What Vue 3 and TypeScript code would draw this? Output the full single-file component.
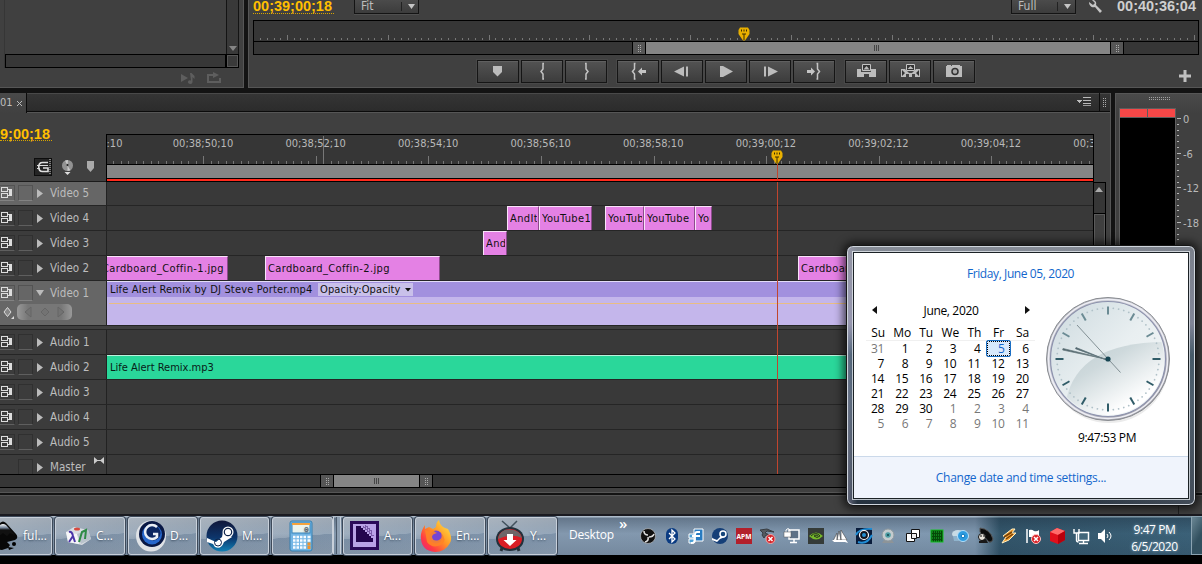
<script setup lang="ts">
interface Clip { x: number; w: number; label: string }
interface Track { name: string; clips: Clip[]; lit?: boolean; tall?: boolean; audio?: boolean; master?: boolean }

const tracks: Track[] = [
  { name: 'Video 5', clips: [], lit: true },
  {
    name: 'Video 4',
    clips: [
      { x: 400, w: 32, label: 'AndIt' },
      { x: 432, w: 53, label: 'YouTube1' },
      { x: 498, w: 39, label: 'YouTube' },
      { x: 537, w: 51, label: 'YouTube' },
      { x: 588, w: 17, label: 'YouTube' },
    ],
  },
  { name: 'Video 3', clips: [{ x: 376, w: 24, label: 'AndIt' }] },
  {
    name: 'Video 2',
    clips: [
      { x: -8, w: 129, label: 'Cardboard_Coffin-1.jpg' },
      { x: 158, w: 175, label: 'Cardboard_Coffin-2.jpg' },
      { x: 691, w: 120, label: 'Cardboard_Coffin-3.jpg' },
    ],
  },
  { name: 'Video 1', clips: [], lit: true, tall: true },
  { name: 'Audio 1', clips: [], audio: true },
  { name: 'Audio 2', clips: [], audio: true },
  { name: 'Audio 3', clips: [], audio: true },
  { name: 'Audio 4', clips: [], audio: true },
  { name: 'Audio 5', clips: [], audio: true },
  { name: 'Master', clips: [], audio: true, master: true },
]

const monitorTicks = Array.from({ length: 146 }, (_, i) => ({ x: Math.round(33 + (i - 5) * 6.717), major: (i - 5) % 15 === 0 })).filter(t => t.x >= 0 && t.x < 943)
const rulerTicks = Array.from({ length: 134 }, (_, i) => ({ x: Math.round(96.3 + (i - 13) * 7.505), major: (i - 13) % 15 === 0 })).filter(t => t.x > 0 && t.x < 986)
const rulerLabels = [':10', '00;38;50;10', '00;38;52;10', '00;38;54;10', '00;38;56;10', '00;38;58;10', '00;39;00;12', '00;39;02;12', '00;39;04;12', '00;39;06;12']
  .map((text, i) => ({ text, x: i === 0 ? 7.5 : 96 + (i - 1) * 112.57 }))

const meterTicks = Array.from({ length: 30 }, (_, i) => ({ y: Math.round(10 + i * 5.78), major: i % 6 === 0 }))
const meterLabels = ['0', '-6', '-12', '-18']

const weekdays = ['Su', 'Mo', 'Tu', 'We', 'Th', 'Fr', 'Sa']
const days = [31, ...Array.from({ length: 30 }, (_, i) => i + 1), ...Array.from({ length: 11 }, (_, i) => i + 1)]
const isOther = (i: number) => i === 0 || i > 30

const hourMarks = Array.from({ length: 12 }, (_, i) => i * 30)
const minuteMarks = Array.from({ length: 60 }, (_, i) => i).filter(i => i % 5).map(i => i * 6)
</script>

<template>
  <div class="screen">
    <div class="top">
      <section class="source">
        <div class="src-view">
          <div class="src-main"></div>
          <div class="src-vscroll">
            <svg width="8" height="6"><path d="M0 1h8L4 6z" fill="#858585" /></svg>
          </div>
          <div class="src-hscroll"></div>
          <div class="src-corner"></div>
        </div>
        <div class="src-tools">
          <svg width="16" height="12" fill="#5e5e5e"><path d="M1 2l7 4-7 4zM10 1h1.500l3 3v3l-2-2v5a2.300 1.800 0 1 1-1.500-1.600z" /></svg>
          <svg width="15" height="12" fill="none" stroke="#5e5e5e" stroke-width="2"><path d="M6 3H1v7h12V6" /><path d="M6 0l6 3-6 3z" fill="#5e5e5e" stroke="none" /></svg>
        </div>
      </section>

      <section class="program">
        <div class="prog-info">
          <span class="tc tc-main">00;39;00;18</span>
          <div class="select fit"><span>Fit</span><i></i><svg width="8" height="6"><path d="M0 0h7L3.500 5z" fill="#c5c5c5" /></svg></div>
          <div class="grow"></div>
          <div class="select full"><span>Full</span><i></i><svg width="8" height="6"><path d="M0 0h7L3.500 5z" fill="#c5c5c5" /></svg></div>
          <svg class="wrench" width="15" height="14"><path d="M4 0l3 3-2 2-4-3c0 4 3 6 6 5l5 6 2-2-6-6c1-3-1-5-4-5z" fill="#c4c4c4" /></svg>
          <span class="duration">00;40;36;04</span>
        </div>
        <div class="mon-ruler">
          <svg width="943" height="20" shape-rendering="crispEdges">
            <rect v-for="t in monitorTicks" :key="t.x" :x="t.x" :y="t.major ? 14 : 17" width="1" :height="t.major ? 5 : 2" fill="#777" />
          </svg>
          <svg class="mon-head" width="12" height="14" viewBox="0 0 12 14"><path d="M2 .5h8L11.500 3v4L7 13.500H5L.5 7V3z" fill="#e9b000" /><path d="M3.500 2.500v2M6 2.500v2M8.500 2.500v2M4 7h4M6 7v6" stroke="#3a2c00" fill="none" /></svg>
          <div class="zoombar">
            <div class="zb-pre"></div>
            <div class="handle"><b class="dots"></b></div>
            <div class="thumb"><b class="lines"></b></div>
            <div class="handle"><b class="dots"></b></div>
          </div>
        </div>
        <div class="transport">
          <div class="btn"><svg width="42" height="23"><path d="M16 6h9v6l-4.500 4.500L16 12z" fill="#bcbcbc" /></svg></div>
          <div class="btn"><svg width="42" height="23"><path d="M23 3.500h-1V9l-2 2.500 2 2.500v5h1" fill="none" stroke="#c4c4c4" stroke-width="1.500" /></svg></div>
          <div class="btn gap"><svg width="42" height="23"><path d="M20 3.500h1V9l2 2.500-2 2.500v5h-1" fill="none" stroke="#c4c4c4" stroke-width="1.500" /></svg></div>
          <div class="btn"><svg width="42" height="23"><path d="M18.500 3.500h-1V9l-2 2.500 2 2.500v5h1" fill="none" stroke="#c4c4c4" stroke-width="1.500" /><path d="M21 11.500l4-4V10h4v3h-4v2.500z" fill="#c4c4c4" /></svg></div>
          <div class="btn"><svg width="42" height="23" fill="#bcbcbc"><path d="M13 11.500l10-5v10zM25 6.500h2v10h-2z" /></svg></div>
          <div class="btn"><svg width="42" height="23" fill="#bcbcbc"><path d="M15 6h3l10 5.500L18 17h-3z" /></svg></div>
          <div class="btn"><svg width="42" height="23" fill="#bcbcbc"><path d="M15 6.500h2v10h-2zM19 6.500l10 5-10 5z" /></svg></div>
          <div class="btn gap"><svg width="42" height="23"><path d="M23.500 3.500h1V9l2 2.500-2 2.500v5h-1" fill="none" stroke="#c4c4c4" stroke-width="1.500" /><path d="M22 11.500l-4-4V10h-4v3h4v2.500z" fill="#c4c4c4" /></svg></div>
          <div class="btn"><svg width="42" height="23" fill="#bcbcbc"><path d="M12 9h4v3h10V9h5v8h-7v-3h-5v3h-7z" /><path d="M17.500 4.500h8v6h-8z" fill="#333" stroke="#c4c4c4" /><path d="M18.500 9.500l3-3.500 3 3.500z" /></svg></div>
          <div class="btn"><svg width="42" height="23" fill="#bcbcbc"><path d="M12 9h4l4 4h3l4-4h4v8h-5v-3h-3v3h-3v-3h-3v3h-5z" /><path d="M13 10l3 3-3 3zM30 10l-3 3 3 3z" fill="#333" /><path d="M17.500 4.500h8v6h-8z" fill="#333" stroke="#c4c4c4" /><path d="M18.500 9l3-3 3 3z" /></svg></div>
          <div class="btn"><svg width="42" height="23"><path d="M13 6h1V5h4v1h1V5h8v1h2v11H13z" fill="#bcbcbc" /><circle cx="22" cy="11.500" r="3" fill="#aaa" stroke="#333" stroke-width="1.500" /></svg></div>
          <svg class="plus" width="12" height="12"><path d="M4.500 0h3v4.500H12v3H7.500V12h-3V7.500H0v-3h4.500z" fill="#c0c0c0" /></svg>
        </div>
      </section>
    </div>

    <div class="middle">
      <section class="timeline">
        <div class="tabs">
          <div class="tab">01 <svg width="7" height="7"><path d="M1 1l5 5M6 1L1 6" stroke="#bbb" /></svg></div>
          <div class="tabfill"></div>
          <svg class="menu" width="15" height="10" shape-rendering="crispEdges"><path d="M0 3h5L2.500 6z" fill="#bbb" /><path d="M6 .5h8M6 3.500h8M6 6.500h8" stroke="#bbb" /><path d="M6 9h8v-1H6z" fill="#999" /></svg>
          <div class="grip"><b class="dots"></b></div>
        </div>

        <div class="tl-body">
          <div class="tl-left">
            <span class="tc">9;00;18</span>
            <div class="tl-tools">
              <svg width="19" height="18"><rect x=".5" y=".5" width="17" height="17" fill="#252525" stroke="#0d0d0d" /><path d="M14 4.500H8.500C3.500 4.500 3.500 13.500 8.500 13.500H14V10H9" fill="none" stroke="#e0e0e0" stroke-width="1.600" /><path d="M3 7.500h7M3 10.500h3M10 7.500h4" fill="none" stroke="#ddd" /><path d="M16 1v16" stroke="#ddd" stroke-dasharray="1 1" /></svg>
              <svg width="13" height="17"><circle cx="6.500" cy="6.500" r="5.500" fill="#929292" /><path d="M6.500 6.500L4 1.500l3-.5zM6.500 6.500l3 5-3 .5z" fill="#cacaca" /><circle cx="6.500" cy="6" r="1" fill="#222" /><path d="M3.500 13h6L6.500 16z" fill="#ddd" /></svg>
              <svg width="9" height="12"><path d="M1 0h7v7l-3.500 4L1 7z" fill="#aaa" /></svg>
            </div>
          </div>
          <div class="tl-ruler">
            <svg width="986" height="28" shape-rendering="crispEdges">
              <rect v-for="t in rulerTicks" :key="t.x" :x="t.x" :y="t.major ? 20 : 25" width="1" :height="t.major ? 8 : 3" fill="#777" />
              <rect x="216" y="0" width="1" height="28" fill="#777" />
              <text v-for="l in rulerLabels" :key="l.text" :x="l.x" y="11" text-anchor="middle" class="rl">{{ l.text }}</text>
            </svg>
            <div class="work"></div>
            <div class="render"></div>
            <div class="headline"></div>
            <svg class="head" width="12" height="14" viewBox="0 0 12 14"><path d="M2 .5h8L11.500 3v4L7 13.500H5L.5 7V3z" fill="#e9b000" /><path d="M3.500 2.500v2M6 2.500v2M8.500 2.500v2M4 7h4M6 7v6" stroke="#3a2c00" fill="none" /></svg>
          </div>
        </div>

        <div class="tracks-wrap">
          <div class="tracks">
            <div v-for="t in tracks" :key="t.name" class="track" :class="{ tall: t.tall, master: t.master }">
              <div class="thead" :class="{ lit: t.lit }">
                <div class="cell first" :class="{ none: t.master }">
                  <svg v-if="!t.master" width="12" height="11" shape-rendering="crispEdges"><path d="M0 0h7v5H0zM1 1v3h5V1zM0 6h7v5H0zM1 7v3h5V7z" fill="#ddd" fill-rule="evenodd" /><path d="M7 2h4v7H7V8h1V3H7z" fill="#ddd" /></svg>
                </div>
                <div class="cell"></div>
                <svg class="tri" width="8" height="9"><path :d="t.tall ? 'M0 1h8L4 7z' : 'M1 0l6 4.5L1 9z'" fill="#bbb" /></svg>
                <span class="tname">{{ t.name }}</span>
                <svg v-if="t.master" class="bow" width="10" height="7"><path d="M0 0l4 3.500L0 7zM10 0L6 3.500 10 7z" fill="#ccc" /><path d="M3 3.500h4" stroke="#ccc" /></svg>
                <div v-if="t.tall" class="keyrow">
                  <svg width="16" height="15"><path d="M7.500 2.500L11 7l-3.500 4.500L4 7z" fill="#888" stroke="#ddd" /><path d="M14 11v3h-3z" fill="#ddd" /></svg>
                  <div class="keypill"><svg width="55" height="16" fill="#737373" stroke="#666"><path d="M14 3v10L8 8zM41 3v10l6-5zM28 4l4 4-4 4-4-4z" /></svg></div>
                </div>
              </div>
              <div class="lane">
                <div v-for="c in t.clips" :key="c.x" class="clip" :style="{ left: c.x + 'px', width: c.w + 'px' }"><span>{{ c.label }}</span></div>
                <div v-if="t.tall" class="vclip">
                  <div class="vtitle"><span class="vname">Life Alert Remix by DJ Steve Porter.mp4</span><span class="fx">Opacity:Opacity<svg width="6" height="4"><path d="M0 0h6L3 3.500z" fill="#111" /></svg></span></div>
                  <div class="opline"></div>
                </div>
                <div v-if="t.name === 'Audio 2'" class="aclip">Life Alert Remix.mp3</div>
              </div>
            </div>
            <div class="playline"></div>
          </div>
          <div class="vscroll">
            <div class="vup"><svg width="8" height="5"><path d="M0 5h8L4 0z" fill="#aaa" /></svg></div>
            <div class="vthumb"></div>
          </div>
        </div>
        <div class="hbar">
          <div class="hb-pre"></div>
          <div class="handle"><b class="dots"></b></div>
          <div class="thumb"><b class="lines"></b></div>
          <div class="handle"><b class="dots"></b></div>
        </div>
      </section>

      <section class="meters">
        <b class="mgrip"></b>
        <div class="mrow">
          <div class="mbox"><div class="peaks"><i></i><i></i></div><div class="mblack"></div></div>
          <svg width="26" height="180" shape-rendering="crispEdges">
            <rect v-for="t in meterTicks" :key="t.y" x="1" :y="t.y" :width="t.major ? 4 : 2" height="1" fill="#b5b5b5" />
            <text v-for="(m, i) in meterLabels" :key="m" x="7" :y="15 + i * 34.7" class="ml">{{ m }}</text>
          </svg>
        </div>
      </section>
    </div>

    <div class="status"><div></div></div>

    <footer class="taskbar">
      <div class="task t0">
        <svg width="21" height="34" viewBox="0 0 21 34"><defs><linearGradient id="ink" x1="0" y1="0" x2="0" y2="1"><stop offset="0" stop-color="#fff" /><stop offset=".3" stop-color="#7b8ba0" /><stop offset=".5" stop-color="#111" /></linearGradient></defs><path d="M-12 19L0 4q3-3 6 0l10 11q3 4-1 6l-8 2 3 3-2 3-6 2-6-1z" fill="#080808" /><path d="M-8 17L0 6q3-2 6 0l9 10-5-2-3 3-4-3-4 3z" fill="url(#ink)" /><circle cx="14" cy="25" r="2" /><path d="M8 28l6 1-5 2z" /></svg>
        <span>ful...</span>
      </div>
      <div class="task t1">
        <svg width="32" height="32" viewBox="0 0 32 32"><path d="M4 12l8-5 14 3 3 9-9 6-14-3z" fill="#d9dde2" /><path d="M4 12l11 2 2 10-11-2z" fill="#f6f6f8" /><path d="M15 14l11-4 3 9-10 5z" fill="#b9c3cc" /><path d="M7 12q3-1 4 4l2 6M11 16l-4 6" fill="none" stroke="#4b35a8" stroke-width="2" /><path d="M17 22l3-10 4-2-1 9" fill="none" stroke="#2e8b46" stroke-width="2" /><ellipse cx="15" cy="9" rx="3" ry="1.500" fill="#d7493f" /></svg>
        <span>C...</span>
      </div>
      <div class="task t2">
        <svg width="32" height="34" viewBox="0 0 32 34"><ellipse cx="16" cy="17" rx="15" ry="15.500" fill="#dfe2e6" /><circle cx="17" cy="15" r="13" fill="#091845" /><circle cx="17" cy="15.500" r="10" fill="#2767cc" /><circle cx="18" cy="14" r="7.500" fill="#0b2560" /><path d="M22 8a7 7 0 1 0 0 10v-3h-4" fill="none" stroke="#e9eef5" stroke-width="2.500" /></svg>
        <span>D...</span>
      </div>
      <div class="task t3">
        <svg width="32" height="32" viewBox="0 0 32 32"><defs><linearGradient id="st" x1="0" y1="0" x2="0" y2="1"><stop offset="0" stop-color="#10173a" /><stop offset=".55" stop-color="#0d356b" /><stop offset="1" stop-color="#1080b5" /></linearGradient></defs><circle cx="16" cy="16" r="15.500" fill="url(#st)" /><path d="M1 18l9 4 6-5 1-5 9 5-8 5q-3 8-9 5l-2-3-6-2z" fill="#fff" /><circle cx="22" cy="12" r="5.500" fill="#fff" /><circle cx="22" cy="12" r="3.700" fill="#fff" stroke="#10254c" stroke-width="1.200" /><circle cx="12" cy="22.500" r="3.500" fill="none" stroke="#10254c" /></svg>
        <span>M...</span>
      </div>
      <div class="task t4">
        <svg width="24" height="32" viewBox="0 0 24 32"><rect x="1" y="1" width="22" height="30" rx="2" fill="#73b6e5" stroke="#377fae" /><rect x="3" y="3" width="18" height="10" fill="#eaf3ec" stroke="#3983b9" /><path d="M3 3h18v2H3z" fill="#f3a23c" /><text x="15" y="12" font-family="Liberation Mono" font-size="8" fill="#345">0</text><path d="M4 17h13M4 20.500h13M4 24h13M4 27.500h13" stroke="#f6fbff" stroke-width="2.500" stroke-dasharray="2.500 1" /><path d="M18.500 17h3M18.500 20.500h3" stroke="#f6fbff" stroke-width="2.500" /><path d="M18.500 24h3M18.500 27.500h3" stroke="#f2932b" stroke-width="3" /></svg>
      </div>
      <div class="stack"></div>
      <div class="task t5">
        <svg width="30" height="30" viewBox="0 0 30 30"><rect x="1.500" y="1.500" width="26" height="26" fill="#b9a2e6" stroke="#2b0a58" stroke-width="3" /><path d="M6 5v16h17v-4h-2v-2h-2v-2h-2v-2h-2V9h-2V7h-2V5z" fill="#24064e" /><path d="M13 6h2v2h2v2h2v2h2v2h2v2M15 5h2v2h2v2h2v2h2" fill="none" stroke="#3a176c" stroke-dasharray="1 1" /></svg>
        <span>A...</span>
      </div>
      <div class="task t6">
        <svg width="32" height="32" viewBox="0 0 32 32"><defs><linearGradient id="ff" x1="1" y1="0" x2="0" y2="1"><stop offset="0" stop-color="#fff04a" /><stop offset=".45" stop-color="#ff9526" /><stop offset=".75" stop-color="#ff3b43" /><stop offset="1" stop-color="#e1208a" /></linearGradient></defs><path d="M19 0q1 6 6 8l3 1q5 9 2 14-5 9-15 9Q2 31 1 19q-1-7 4-14v4l4-2 4 2 3-2Q16 2 19 0z" fill="url(#ff)" /><circle cx="16" cy="17" r="6.500" fill="#7545d2" /><path d="M5 10q5 1 8 0l2 2 2 1q-5 1-5 4 1 5 7 3 4-2 2-7 7 7 0 12-9 4-14-3z" fill="#ff8426" opacity=".9" /></svg>
        <span>En...</span>
      </div>
      <div class="task t7">
        <svg width="32" height="34" viewBox="0 0 32 34"><path d="M8 2l8 7 7-7" fill="none" stroke="#43525e" stroke-width="1.500" /><path d="M8 29l-1 3M24 29l1 3" stroke="#28323a" stroke-width="3" /><ellipse cx="16" cy="20" rx="14" ry="12" fill="#22303b" /><ellipse cx="16" cy="20" rx="12" ry="10" fill="#d91d25" /><path d="M4 20Q6 10 16 10.500t12 8.500q-10-5-24 1z" fill="#6d6668" /><path d="M13 15h6v6h3.500L16 27l-6.500-6H13z" fill="#fff" /></svg>
        <span>Y...</span>
      </div>
      <div class="deskbar"><span>Desktop</span><b>»</b></div>
      <div class="tray">
        <svg viewBox="0 0 20 20"><circle cx="10" cy="10" r="7.500" fill="#111" stroke="#c7c7c7" stroke-width=".6" /><path d="M10 9q-4 0-4-4M10 11q1 4-3 5M11 11q4 0 5-3" fill="none" stroke="#ddd" stroke-width="1.600" /></svg>
        <svg viewBox="0 0 20 20"><rect x="4" y="2" width="12" height="16" rx="6" fill="#0a3b82" /><path d="M7 7l6 6-3 3V4l3 3-6 6" fill="none" stroke="#fff" stroke-width="1.300" /></svg>
        <svg viewBox="0 0 20 20"><path d="M8 3h9v12H8z" fill="#287bc0" stroke="#fff" /><path d="M3 8h5v4H3zM3 13h5v4H3z" fill="#4ba0d7" stroke="#fff" /><path d="M14 6h-3q-2 0-2 3v5q0 3-4 3M6 10h8" fill="none" stroke="#fff" stroke-width="1.800" /></svg>
        <svg viewBox="0 0 20 20"><circle cx="10" cy="10" r="8" fill="#153f78" /><path d="M2 12l5 2 4-4V7l4 4-5 2-3 3-5-2z" fill="#fff" /><circle cx="13" cy="8" r="3" fill="#17477b" stroke="#fff" stroke-width="1.500" /></svg>
        <svg viewBox="0 0 20 20"><path d="M2 2h16v16H2z" fill="#b3202b" /><text x="2.500" y="13" textLength="15" lengthAdjust="spacingAndGlyphs" class="apm">APM</text></svg>
        <svg viewBox="0 0 20 20"><path d="M2 4l7-1 7 3-7-1-2 2 7 3-6-1-2 3-2-3 1-2z" fill="#555a60" stroke="#383d42" /><circle cx="12.500" cy="13" r="4.500" fill="#d42025" stroke="#f2a8a8" /><path d="M10.500 11l4 4m0-4l-4 4" stroke="#fff" stroke-width="1.500" /></svg>
        <svg viewBox="0 0 20 20"><rect x="7" y="4" width="10" height="9" fill="#5d7186" stroke="#fff" stroke-width="1.500" /><path d="M12 13v3M8 16.500h7" stroke="#fff" stroke-width="1.500" /><path d="M4 6V4q2-3 4 0v2" fill="none" stroke="#fff" /><rect x="2" y="6" width="7" height="5" fill="#fff" stroke="#555" stroke-width=".5" /></svg>
        <svg viewBox="0 0 20 20"><rect x="2" y="2" width="16" height="16" fill="#353b38" /><path d="M3 10q7-7 14 0-7 7-14 0z" fill="#75b82b" /><path d="M5 10q5-5 9 0-3 3-6 0 2-2 4 0" fill="none" stroke="#27371d" /></svg>
        <svg viewBox="0 0 20 20"><path d="M3 15L7 7v8zM7 14l2-9 2 9zM11 14V4l6 10z" fill="#fff" stroke="#444" stroke-width=".6" /><path d="M2 14h14l2 3-3-1H4z" fill="#fff" /></svg>
        <svg viewBox="0 0 20 20"><rect x="2" y="2" width="16" height="16" fill="#091c3b" /><path d="M2 9q3-7 16-6M4 16q9 3 14-7" stroke="#218ed6" fill="none" stroke-width="2" /><circle cx="10" cy="9" r="4.500" fill="#10151f" stroke="#fff" stroke-width="1.200" /><circle cx="10" cy="9" r="2" fill="#258fd1" /></svg>
        <svg viewBox="0 0 20 20"><path d="M6 14h8l2 3H4z" fill="#8d9498" /><circle cx="10" cy="9" r="6" fill="#c4cccf" stroke="#8f999e" /><circle cx="10" cy="9" r="2.800" fill="#4d9da3" /><circle cx="10" cy="9" r="1" fill="#124650" /></svg>
        <svg viewBox="0 0 20 20" fill="#fff" stroke="#111"><path d="M8.500 3.500h8v8h-8z" /><path d="M3.500 7.500h8v8h-8z" /><path d="M8.500 7.500h5v5h-5z" fill="#eee" /></svg>
        <svg viewBox="0 0 20 20"><rect x="4" y="4" width="12" height="12" fill="#054907" stroke="#12c321" /><path d="M5 6h10M5 9h10M5 12h10M5 15h10" stroke="#1bb830" stroke-dasharray="1 1" /></svg>
        <svg viewBox="0 0 20 20"><ellipse cx="7" cy="8" rx="6" ry="4" fill="#c8dbe5" /><path d="M2 10h6v5H3z" fill="#8fb3cc" /><circle cx="12" cy="10" r="5.500" fill="#2f9ce0" stroke="#b5e0fa" /><circle cx="12" cy="10" r="1.800" fill="#fff" stroke="#0674bb" /></svg>
        <svg viewBox="0 0 20 20"><path d="M5 2q10 1 13 11-1 4-4 3L5 6z" fill="#0b0b0b" stroke="#555" /><circle cx="7" cy="11" r="3.500" fill="#e8e3db" stroke="#111" /><path d="M4 15l7-2 2 4H4z" fill="#181818" /><path d="M5 10h2m1 0h2" stroke="#111" /></svg>
        <svg viewBox="0 0 20 20"><path d="M13 3l-9 7 3 1-4 6 7-3 7-7h-4l3-4z" fill="#f2a034" stroke="#fff0c3" /><path d="M5 11l8-5M7 13l7-5" stroke="#784006" stroke-width="1.500" /></svg>
        <svg viewBox="0 0 20 20"><path d="M4 3v14" stroke="#fff" stroke-width="1.500" /><path d="M6 4q3-1 5 1 3 1 5-1v7H6z" fill="#fff" /><circle cx="13" cy="13" r="4.500" fill="#d92025" stroke="#ffc4c4" /><path d="M11 11l4 4m0-4l-4 4" stroke="#fff" stroke-width="1.500" /></svg>
        <svg viewBox="0 0 20 20"><path d="M10 2l8 3v9l-7 4-8-3V6z" fill="#e1101c" /><path d="M10 2l8 3-7 4-8-3z" fill="#ff6b6b" /><path d="M11 9l7-4v9l-7 4z" fill="#b8000c" /></svg>
        <svg viewBox="0 0 20 20"><rect x="7.500" y="6.500" width="10" height="8" fill="#43677b" stroke="#fff" stroke-width="1.500" /><path d="M12.500 15v2M8 17.500h9M3 3v4h5V3M5.500 7v7q0 2 2 2" fill="none" stroke="#fff" stroke-width="1.400" /></svg>
        <svg viewBox="0 0 20 20"><path d="M3 7h3l4-4v14l-4-4H3z" fill="#fff" /><path d="M12 8q2 2 0 4M14 6q4 4 0 8" fill="none" stroke="#fff" /></svg>
      </div>
      <div class="tclock"><span>9:47 PM</span><span>6/5/2020</span></div>
      <div class="showdesk"></div>
    </footer>

    <div class="flyout">
      <div class="fly-in">
        <div class="fly-date"><span>Friday, June 05, 2020</span></div>
        <div class="fly-mid">
          <div class="cal">
            <div class="cal-nav">
              <svg width="5" height="8"><path d="M5 0v8L0 4z" fill="#111" /></svg>
              <span>June, 2020</span>
              <svg width="5" height="8"><path d="M0 0v8l5-4z" fill="#111" /></svg>
            </div>
            <div class="cal-week"><span v-for="d in weekdays" :key="d">{{ d }}</span></div>
            <div class="cal-days"><span v-for="(d, i) in days" :key="i" :class="{ other: isOther(i), today: i === 5 }">{{ d }}</span></div>
          </div>
          <div class="clock">
            <svg width="130" height="130" viewBox="-65 -65 130 130">
              <defs>
                <linearGradient id="rim" x1="0" y1="0" x2="1" y2="1"><stop offset="0" stop-color="#a2a5aa" /><stop offset=".4" stop-color="#d5d6de" /><stop offset="1" stop-color="#8d8d95" /></linearGradient>
                <linearGradient id="face" x1="0" y1="0" x2="1" y2="1"><stop offset="0" stop-color="#ccd9de" /><stop offset=".5" stop-color="#e9eff1" /><stop offset="1" stop-color="#f4f7f8" /></linearGradient>
                <linearGradient id="gloss" x1="0" y1="0" x2=".8" y2="1"><stop offset="0" stop-color="#bdcbcf" /><stop offset=".35" stop-color="#ced9dc" /><stop offset=".8" stop-color="#fff" /></linearGradient>
                <clipPath id="dial"><circle r="56" /></clipPath>
              </defs>
              <ellipse cx="1" cy="4" rx="60" ry="60" fill="#ddd" opacity=".6" />
              <circle r="61.500" fill="url(#rim)" stroke="#898c91" />
              <circle r="59.500" fill="none" stroke="#eeeef5" stroke-width="1.500" />
              <circle r="57.500" fill="url(#face)" stroke="#8d92ae" stroke-width="1.200" />
              <path d="M-42 42Q-31-17 58-17V60H-42z" fill="url(#gloss)" clip-path="url(#dial)" />
              <circle v-for="a in minuteMarks" :key="a" cy="-51" r=".9" fill="#b0c1c8" :transform="`rotate(${a})`" />
              <rect v-for="a in hourMarks" :key="a" x="-1" y="-52.500" width="2" height="8" :fill="a > 80 && a < 290 ? '#305c68' : '#6b8b94'" :transform="`rotate(${a})`" />
              <path d="M0 1.500L-32-11.500l-.5 1.200z" fill="#455b63" stroke="#60747b" stroke-width=".8" />
              <path d="M2 1L-45-10.500l-.3 1.500z" fill="#455b63" stroke="#6b7c82" stroke-width=".8" />
              <path d="M-31-34L12.500 13.500" stroke="#5a6a70" stroke-width=".7" />
              <circle r="2.600" fill="#174653" />
            </svg>
            <span>9:47:53 PM</span>
          </div>
        </div>
        <div class="fly-foot"><span>Change date and time settings...</span></div>
      </div>
    </div>
  </div>
</template>

<style>
html, body { margin: 0; background: #000; overflow: hidden; }
</style>

<style scoped>
* { box-sizing: border-box; }
svg { display: block; flex: none; }
.screen { position: relative; width: 1202px; height: 564px; overflow: hidden; background: #131313; display: flex; flex-direction: column; font: 11px/14px "DejaVu Sans Condensed", "DejaVu Sans", sans-serif; font-stretch: condensed; color: #bdbdbd; white-space: nowrap; }
.top { display: flex; gap: 4px; height: 88px; flex: none; }
.source { width: 244px; background: #404040; border: solid #565656; border-width: 0 1px 1px 0; }
.src-view { display: grid; width: 234px; height: 68px; margin-left: 5px; grid-template: 54px 14px / 221px 13px; box-shadow: -1px 0 #363636; }
.src-vscroll { background: #393939; border: solid #141414; border-width: 0 1px; display: flex; align-items: flex-end; justify-content: center; padding-bottom: 3px; }
.src-hscroll { background: #373737; border: 1px solid #000; }
.src-corner { background: #3a3a3a; border: 1px solid #000; box-shadow: inset 0 0 0 1px #565656; }
.src-tools { display: flex; gap: 11px; margin: 4px 0 0 180px; }
.program { flex: 1; background: #404040; border: solid #565656; border-width: 0 0 1px 1px; padding-left: 4px; }
.prog-info { display: flex; height: 20px; align-items: flex-start; }
.grow { flex: 1; }
.tc { font: bold 14.500px/14px "Liberation Sans", Arial, sans-serif; color: #ffbf00; border-bottom: 1px dotted #d7a400; height: 14px; letter-spacing: 0; }
.tc-main { width: 81px; line-height: 13px; margin-right: 20px; }
.select { display: flex; align-items: flex-start; height: 14px; border: 1px solid #141414; border-top: 0; background: linear-gradient(#4b4b4b, #3c3c3c); box-shadow: 0 1px #4f4f4f; }
.select span { line-height: 13px; font-size: 12px; }
.select i { width: 1px; height: 9px; margin-top: 2px; background: #222; }
.select svg { margin: 4px 0 0 6px; flex: none; }
.fit { width: 65px; padding-left: 6px; }
.fit span { width: 40px; flex: none; }
.full { width: 65px; padding-left: 6px; }
.full span { width: 39px; flex: none; }
.wrench { margin-left: 12px; }
.duration { width: 79px; margin: 0 6px 0 14px; font: bold 14.500px/13px "Liberation Sans", Arial, sans-serif; color: #cfcfcf; }
.mon-ruler { position: relative; width: 946px; height: 35px; border: 1px solid #000; background: #363636; }
.mon-head { position: absolute; left: 484px; top: 6px; }
.zoombar { display: flex; height: 13px; border-top: 1px solid #000; }
.zb-pre { width: 378px; }
.handle { width: 14px; border: solid #000; border-width: 0 1px; background: #565656; display: flex; align-items: center; justify-content: center; }
.thumb { background: #858585; display: flex; align-items: center; justify-content: center; }
.zoombar .thumb { width: 464px; }
.dots { display: block; width: 3px; height: 7px; background: repeating-linear-gradient(#aaa 0 1px, transparent 1px 2px); -webkit-mask: repeating-linear-gradient(90deg, #000 0 1px, transparent 1px 2px); mask: repeating-linear-gradient(90deg, #000 0 1px, transparent 1px 2px); }
.lines { width: 5px; height: 6px; margin-right: 3px; background: repeating-linear-gradient(90deg, #444 0 1px, transparent 1px 2px); }
.hbar .lines { margin-right: 1px; }
.transport { display: flex; gap: 2px; padding: 5px 0 0 224px; }
.btn { width: 42px; height: 23px; background: linear-gradient(#535353, #3c3c3c); border: 1px solid #151515; box-shadow: inset 0 1px #606060, 0 0 0 1px #484848; }
.btn svg { margin: -1px; }
.btn.gap { margin-right: 8px; }
.plus { margin: 10px 0 0 202px; }
.middle { display: flex; gap: 4px; margin-top: 5px; height: 400px; flex: none; }
.timeline { width: 1111px; background: #404040; border: solid #565656; border-width: 0 1px 1px 0; display: flex; flex-direction: column; }
.tabs { display: flex; height: 20px; background: linear-gradient(#353535, #2b2b2b); border-bottom: 1px solid #565656; flex: none; box-shadow: inset 0 -1px #0b0b0b, inset 0 1px #494949; }
.tab { width: 27px; height: 20px; background: linear-gradient(#494949, #404040); border-right: 1px solid #0b0b0b; display: flex; align-items: center; gap: 3px; padding-right: 3px; }
.tabfill { flex: 1; }
.menu { margin: 4px 7px 0 0; }
.grip { width: 11px; border-left: 1px solid #0b0b0b; height: 18px; padding: 5px 0 0 3px; }
.grip .dots { height: 10px; }
.tl-body { display: flex; height: 69px; flex: none; }
.tl-left { width: 106px; padding-top: 14px; border-bottom: 1px solid #1b1b1b; }
.tl-left .tc { display: block; width: 52px; }
.tl-tools { display: flex; margin: 17px 0 0 34px; gap: 9px; align-items: flex-start; }
.tl-tools svg:nth-child(2) { margin-top: 1px; margin-left: -1px; }
.tl-tools svg:nth-child(3) { margin-left: 3px; margin-top: 3px; }
.tl-ruler { position: relative; width: 988px; margin-top: 21px; height: 48px; border: 1px solid #000; background: #363636; padding-top: 1px; }
.rl, .ml { font: 11px "DejaVu Sans Condensed", "DejaVu Sans", sans-serif; font-stretch: condensed; fill: #b9b9b9; }
.work { height: 14px; border-top: 1px solid #000; background: #858585; }
.render { height: 3px; background: #ff2a1c; border-top: 1px solid #000; }
.head { position: absolute; left: 664px; top: 15px; }
.headline { position: absolute; left: 670px; top: 29px; width: 1px; height: 17px; background: #c0452f; }
.tracks-wrap { display: flex; height: 292px; flex: none; }
.tracks { position: relative; width: 1094px; height: 292px; overflow: hidden; border-right: 1px solid #000; background: #404040; }
.track { display: flex; height: 25px; border-bottom: 1px solid #252525; }
.track:first-child { height: 24px; }
.track.tall { height: 45px; margin-bottom: 3px; }
.track.tall + .track { border-top: 1px solid #252525; height: 26px; }
.thead { position: relative; width: 107px; border-right: 1px solid #222; display: flex; background: #3c3c3c; flex: none; }
.thead.lit { background: #666; }
.track:first-child .thead { padding-top: 0; }
.track:first-child .cell { margin-top: 3px; }
.track:first-child .tri { margin-top: 7px; }
.track:first-child .tname { margin-top: 4px; }
.cell { width: 15px; height: 16px; margin: 4px 3px 0 0; border: 1px solid rgba(0,0,0,.18); border-bottom-color: rgba(255,255,255,.18); flex: none; }
.cell.first { border-left: 0; padding: 1px 0 0 1px; }
.cell.none { border-color: transparent; }
.tri { margin: 8px 0 0; }
.tname { margin: 5px 0 0 6px; font-size: 11.500px; color: #bdbdbd; letter-spacing: .05px; }
.bow { position: absolute; left: 94px; top: 2px; }
.keyrow { position: absolute; left: 0; top: 22px; display: flex; gap: 1px; }
.keyrow > svg { margin-top: 2px; }
.keypill { border-radius: 5px; background: linear-gradient(90deg, #999, #777 20%, #777 80%, #999); height: 16px; margin-top: 1px; }
.lane { position: relative; width: 986px; overflow: hidden; background: #393939; }
.clip { position: absolute; top: 0; height: 24px; background: #e481e4; border: solid #f9e3f9; border-width: 1px 1px 0 1px; border-right-color: #8d4b8d; padding: 5px 1px 0 2px; color: #111; overflow: hidden; letter-spacing: .36px; }
.clip span { display: block; overflow: hidden; }
.vclip { width: 986px; height: 44px; background: #c4b6eb; border-top: 1px solid #e4dcf8; }
.vtitle { height: 15px; background: #a290de; padding-left: 3px; color: #111; display: flex; align-items: center; }
.vname { width: 208px; letter-spacing: .17px; }
.fx { display: flex; align-items: center; gap: 4px; background: #c9c0ea; padding: 0 2px; height: 13px; letter-spacing: .13px; }
.opline { height: 1px; margin: 6px 2px 0; background: #e9bd83; }
.aclip { width: 986px; height: 24px; background: #2ad79a; border-top: 1px solid #b9f2dc; color: #082018; padding: 5px 3px; }
.playline { position: absolute; left: 777px; top: 0; width: 1px; height: 292px; background: #c0452f; }
.vscroll { width: 12px; border-right: 1px solid #000; background: #363636; }
.vup { height: 32px; border-bottom: 1px solid #000; border-top: 1px solid #000; padding: 4px 0 0 1px; }
.vthumb { height: 260px; background: #3f3f3f; box-shadow: inset 0 0 0 1px #5a5a5a; }
.hbar { display: flex; height: 14px; width: 1106px; border: solid #000; border-width: 1px 0; background: #363636; flex: none; }
.hb-pre { width: 320px; }
.hbar .thumb { width: 85px; }
.meters { width: 87px; background: linear-gradient(#4a4a4a, #404040 20px); border: solid #565656; border-width: 1px 0 1px 1px; padding: 3px 0 0 3px; }
.mgrip { display: block; width: 22px; height: 4px; margin-left: 30px; background: repeating-linear-gradient(90deg, #a0a0a0 0 1px, transparent 1px 2px); -webkit-mask: repeating-linear-gradient(#000 0 1px, transparent 1px 2px); mask: repeating-linear-gradient(#000 0 1px, transparent 1px 2px); }
.mrow { display: flex; margin-top: 7px; }
.mbox { width: 58px; border: 1px solid #5d5d5d; height: 370px; background: #5d5d5d; }
.peaks { display: flex; gap: 1px; height: 9px; padding-bottom: 1px; }
.peaks i { flex: 1; background: #f64747; }
.mblack { height: 359px; background: #000; }
.status { height: 21px; margin-top: 2px; background: #404040; border-top: 1px solid #565656; flex: none; }
.status div { width: 1179px; height: 18px; border-right: 1px solid #222; }
.taskbar { height: 41px; margin-top: -2px; flex: none; display: flex; align-items: stretch; border-top: 2px solid #1a1a20; background: linear-gradient(rgba(255,255,255,.35) 0 1px, rgba(20,30,45,.28) 2px, transparent 45%, rgba(20,30,45,.12)), linear-gradient(90deg, #8497ab 0, #8398ae 560px, #7f98b0 975px, #33566b 1000px, #3b6178 1190px, #33505f); color: #fff; font: 12px/16px "Open Sans", "Noto Sans", sans-serif; box-shadow: 0 9px #000; }
.task { height: 38px; margin-top: 1px; border: 1px solid #c8d0da; border-radius: 3px; background: linear-gradient(175deg, rgba(255,255,255,.45), rgba(255,255,255,.15) 50%, rgba(80,100,130,.1) 51%, rgba(255,255,255,.1)); box-shadow: 0 0 0 1px #3e4a5a; display: flex; align-items: center; gap: 7px; padding-left: 6px; flex: none; text-shadow: 0 1px 2px #3c4d60; }
.t0 { width: 52px; border-left: 0; padding-left: 0; margin-right: 3px; gap: 2px; border-radius: 0 3px 3px 0; }
.t1 { width: 70px; margin-right: 3px; gap: 2px; }
.t2 { width: 69px; margin-right: 3px; gap: 3px; }
.t3 { width: 69px; margin-right: 3px; padding-left: 5px; gap: 4px; }
.t4 { width: 61px; padding-left: 16px; }
.stack { width: 8px; margin: 1px 2px 1px 0; border: solid #c8d0da; border-width: 0 1px; box-shadow: inset -3px 0 #8fa1b4, inset -4px 0 #4b5a6b; }
.t5 { width: 69px; margin-right: 3px; gap: 4px; }
.t6 { width: 70px; margin-right: 3px; padding-left: 4px; gap: 4px; }
.t7 { width: 69px; padding-left: 5px; gap: 4px; }
.deskbar { width: 81px; display: flex; padding: 11px 0 0 12px; flex: none; letter-spacing: -.2px; }
.deskbar b { font-size: 15px; line-height: 12px; margin: -10px 0 0 5px; font-weight: 600; }
.tray { display: flex; align-items: center; gap: 4.050px; flex: none; }
.tray svg { width: 20px; height: 20px; }
.apm { font: bold 6.500px "Open Sans", sans-serif; fill: #fff; }
.tclock { width: 76px; display: flex; flex-direction: column; align-items: center; padding: 5px 0 0 3px; line-height: 17px; letter-spacing: -.45px; flex: none; text-shadow: 0 0 3px #8fb0c4; }
.showdesk { flex: 1; border: 1px solid #8ba3b1; border-right: 0; background: linear-gradient(120deg, #6b8795, #32505f 60%); }
.flyout { position: absolute; left: 846px; top: 245px; width: 350px; height: 261px; border-radius: 7px; border: 1px solid #151515; padding: 6px; background: linear-gradient(90deg, rgba(170,165,190,.5), transparent 3%, transparent 60%, rgba(110,115,125,.4)), linear-gradient(#858b95, #8d90a8 30%, #2c4a5c 42%, #394f60 60%, #26323f); box-shadow: inset 0 0 0 1px #cfd5dc, 0 0 9px 3px rgba(0,0,0,.65); }
.fly-in { width: 336px; height: 247px; border: 1px solid #1c2226; outline: 1px solid rgba(225,230,235,.8); background: #fff; display: flex; flex-direction: column; font: 12px/15px "Open Sans", "Noto Sans", sans-serif; color: #000; letter-spacing: -.35px; }
.fly-date { text-align: center; color: #1266cc; padding: 13px 1px 0 0; height: 43px; letter-spacing: -.4px; }
.fly-mid { display: flex; height: 160px; }
.cal { width: 169px; margin-left: 12px; }
.cal-nav { display: flex; align-items: center; height: 15px; margin: 7px 6px 0; justify-content: space-between; }
.cal-nav svg { margin-top: -2px; }
.cal-nav svg:last-child { margin-right: -1px; }
.cal-week, .cal-days { display: grid; grid-template-columns: repeat(7, 24.100px); }
.cal-week { margin-top: 8px; text-align: center; letter-spacing: -.1px; }
.cal-week span { height: 15px; line-height: 14px; border-bottom: 1px solid #f0f0f0; }
.cal-days span { height: 15px; line-height: 15px; text-align: right; padding-right: 6px; }
.cal-days .other { color: #777; }
.cal-days .today { color: #1266cc; background: #d8e9fc; border: 1px dotted #000; outline: 1px solid #1b6fc4; outline-offset: 0; border-radius: 1px; margin: 0 1px; padding-right: 4px; line-height: 13px; }
.clock { width: 130px; margin: -2px 0 0 8px; display: flex; flex-direction: column; align-items: center; }
.clock span { margin: 6px 2px 0 0; }
.fly-foot { flex: 1; background: #f0f4fc; border-top: 1px solid #cbd9ea; text-align: center; color: #1266cc; padding-top: 13px; letter-spacing: -.28px; }
</style>
